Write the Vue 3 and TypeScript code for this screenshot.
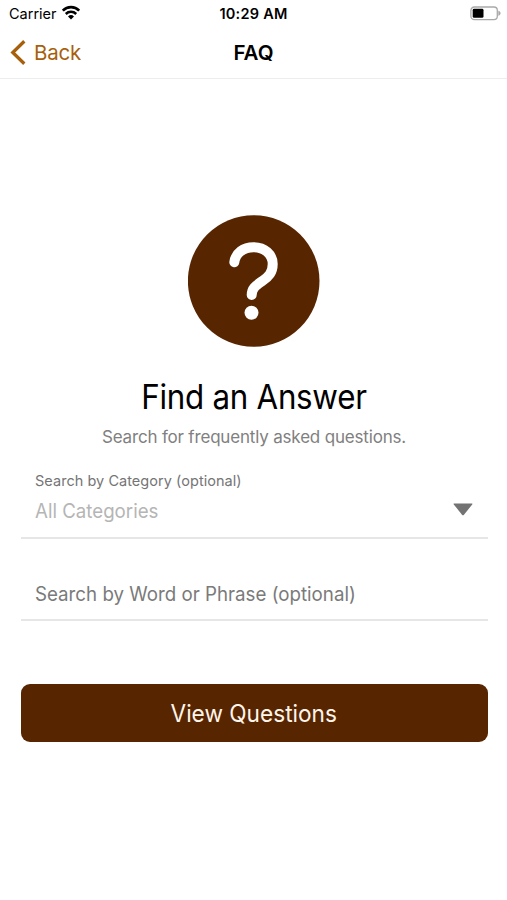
<script setup lang="ts">
import { ref } from 'vue'

const category = ref('All Categories')
const phrase = ref('')
</script>

<template>
  <div class="screen">
    <header>
      <div class="status">
        <div class="carrier">
          <span class="t-carrier">Carrier</span>
          <svg class="wifi" width="20" height="15" viewBox="0 0 20 15">
            <path d="M1.800 5.600a11.600 11.600 0 0 1 16.400 0" fill="none" stroke="#000" stroke-width="2.700" />
            <path d="M4.800 9a7.400 7.400 0 0 1 10.400 0" fill="none" stroke="#000" stroke-width="2.500" />
            <path d="M10 14.500 7 11.400a4.300 4.300 0 0 1 6 0z" fill="#000" />
          </svg>
        </div>
        <span class="t-time">10:29 AM</span>
        <svg class="battery" width="31" height="15" viewBox="0 0 31 15">
          <rect x="0.900" y="1" width="26.400" height="12.600" rx="3.400" fill="#fff" stroke="#a9a9a9" stroke-width="1.300" />
          <rect x="2.700" y="2.800" width="10.800" height="9" rx="1.400" fill="#000" />
          <path d="M28.300 4.800v5c1.300-.3 2.300-1.300 2.300-2.500S29.600 5.100 28.300 4.800z" fill="#a9a9a9" />
        </svg>
      </div>
      <nav class="bar">
        <a class="back">
          <svg width="16" height="26" viewBox="0 0 16 26">
            <path d="M14.300 1.200 2.800 12.500l11.500 11.300" fill="none" stroke="#a85f0c" stroke-width="3.300" />
          </svg>
          <span class="t-back">Back</span>
        </a>
        <span class="t-title">FAQ</span>
        <span></span>
      </nav>
    </header>
    <main>
      <svg class="hero" width="132" height="132" viewBox="0 0 132 132">
        <circle cx="65.700" cy="66" r="65.800" fill="#572500" />
        <path d="M46.300 47.300C47.500 38 55.500 32.200 65.500 32.200C76.700 32.200 84.700 39.500 84.700 49C84.700 57.500 80.700 61.500 74.700 65.800C68 70.500 63.700 73 63.700 80" fill="none" stroke="#fff" stroke-width="10" stroke-linecap="round" />
        <circle cx="63.500" cy="97.700" r="7" fill="#fff" />
      </svg>
      <h1>Find an Answer</h1>
      <p class="sub">Search for frequently asked questions.</p>
      <div class="field category">
        <div class="label">Search by Category (optional)</div>
        <div class="select">
          <span class="t-value">{{ category }}</span>
          <svg class="caret" width="20" height="13" viewBox="0 0 20 13">
            <path d="M1.200.5h17.600q1.200 0 .4 1L11 11.700q-1 1.100-2 0L.8 1.500Q0 .5 1.200.5z" fill="#737373" />
          </svg>
        </div>
      </div>
      <div class="field phrase">
        <span class="t-phrase">{{ phrase || 'Search by Word or Phrase (optional)' }}</span>
      </div>
      <button type="button"><span class="t-btn">View Questions</span></button>
    </main>
  </div>
</template>

<style>
body {
  background: #fff;
}
</style>

<style scoped>
.screen {
  width: 507px;
  height: 900px;
  box-sizing: border-box;
  background: #fff;
  color: #000;
  font-family: Inter, "Liberation Sans", sans-serif;
}
.screen span {
  white-space: nowrap;
}
header {
  height: 79px;
  box-sizing: border-box;
  border-bottom: 1px solid #ededed;
}
.status {
  height: 27px;
  display: grid;
  grid-template-columns: 1fr auto 1fr;
  align-items: center;
  padding: 0 6px 0 9px;
}
.carrier {
  display: flex;
  align-items: center;
  gap: 4px;
}
.wifi {
  margin-top: -2px;
}
.battery {
  justify-self: end;
}
.t-carrier {
  font-size: 14.5px;
}
.t-time {
  margin-right: 3px;
  font-size: 14.5px;
  font-weight: 600;
  letter-spacing: 0.25px;
}
.bar {
  height: 51px;
  display: grid;
  grid-template-columns: 1fr auto 1fr;
  align-items: center;
  padding: 0 10px;
}
.back {
  display: flex;
  align-items: center;
  gap: 8px;
  color: #a85f0c;
}
.t-back {
  font-size: 20.5px;
  letter-spacing: -0.2px;
}
.t-title {
  font-size: 20.5px;
  font-weight: 600;
}
main {
  display: flex;
  flex-direction: column;
  padding: 136px 19px 0 21px;
}
.hero {
  align-self: center;
  margin-right: 1px;
}
h1 {
  margin: 28px 1px 0 0;
  height: 44px;
  line-height: 44px;
  text-align: center;
  font-size: 33.5px;
  font-weight: 400;
  letter-spacing: -0.3px;
  transform: scaleX(0.935);
}
.sub {
  margin: 6px 1px 0 0;
  height: 24px;
  line-height: 24px;
  text-align: center;
  font-size: 17px;
  letter-spacing: -0.18px;
  color: #808080;
}
.field {
  box-sizing: border-box;
  border-bottom: 2px solid #e6e6e6;
  padding: 0 14px;
}
.category {
  margin-top: 22px;
  height: 68px;
}
.label {
  height: 20px;
  line-height: 20px;
  font-size: 14.5px;
  letter-spacing: 0.04px;
  color: #757575;
}
.select {
  display: flex;
  justify-content: space-between;
  align-items: center;
  height: 40px;
  font-size: 19.5px;
  color: #b5b5b5;
}
.t-value,
.t-phrase,
.t-btn {
  display: inline-block;
}
.t-value {
  transform: scaleX(0.958);
  transform-origin: left;
}
.t-phrase {
  transform: scaleX(0.96);
  transform-origin: left;
}
.t-btn {
  transform: translateX(-0.5px) scaleX(0.943);
}
.caret {
  margin: 0 1px 3px 0;
}
.phrase {
  margin-top: 28px;
  height: 54px;
  line-height: 54px;
  font-size: 19.5px;
  color: #7a7a7a;
}
button {
  margin: 63px 0 0 -0.5px;
  height: 58px;
  border: 0;
  border-radius: 9px;
  background: #572500;
  color: #fff5ea;
  font-family: inherit;
  font-size: 24px;
}
</style>
